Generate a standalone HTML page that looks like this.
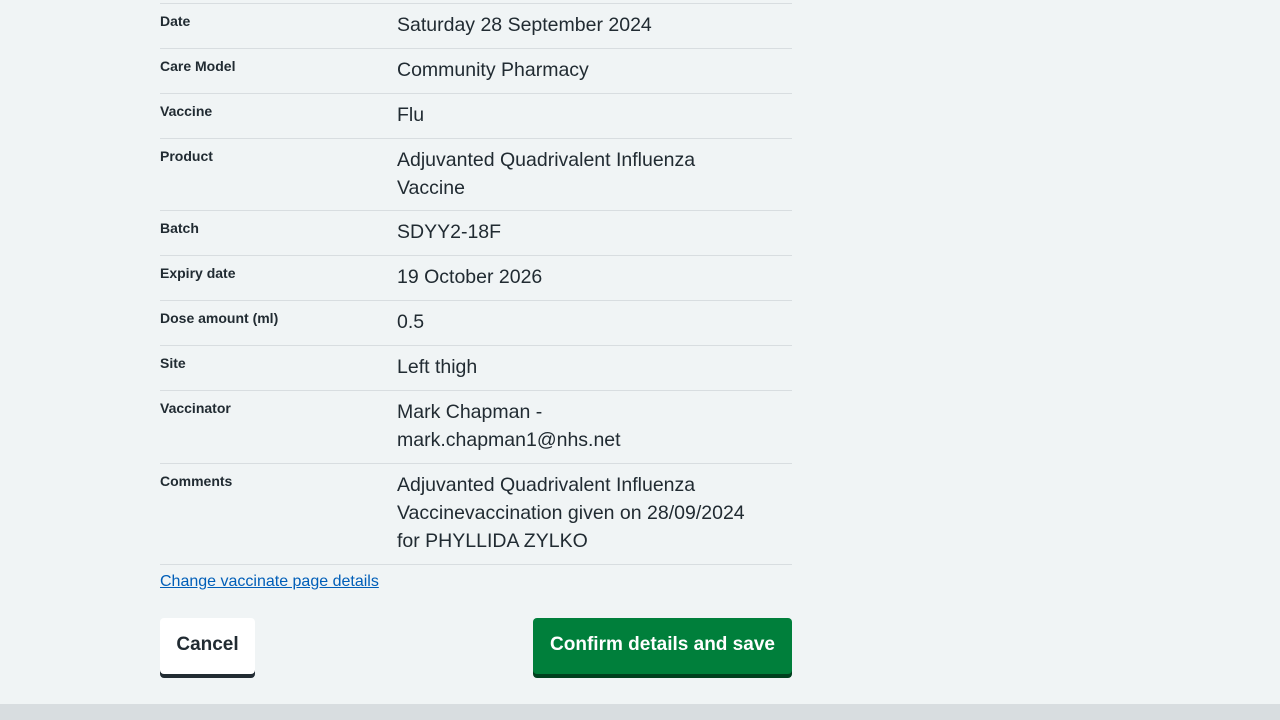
<!DOCTYPE html>
<html><head><meta charset="utf-8"><style>
html,body{margin:0;padding:0}
body{width:1280px;height:720px;background:#f0f4f5;position:relative;overflow:hidden;font-family:"Liberation Sans",sans-serif;color:#212b32}
.line{position:absolute;left:160px;width:632px;height:1px;background:#d8dde0}
.k{position:absolute;left:160px;font-size:14px;font-weight:bold;line-height:18px}
.v{position:absolute;left:397px;font-size:19.5px;line-height:28px;white-space:nowrap;margin-top:1px}
a{position:absolute;left:160px;top:572px;font-size:16px;color:#005eb8;text-decoration:underline;line-height:20px}
.btn{position:absolute;top:618px;height:56px;border-radius:4px;font-weight:bold;font-size:19px;line-height:54px;text-align:center}
.c{left:160px;width:95px;background:#fff;box-shadow:0 4px 0 #212b32;color:#212b32}
.s{left:533px;width:259px;background:#007f3b;box-shadow:0 4px 0 #00401e;color:#fff}
.foot{position:absolute;left:0;top:704px;width:1280px;height:16px;background:#d8dde0}
</style></head><body>
<div class="line" style="top:3px"></div>
<div class="k" style="top:12px">Date</div><div class="v" style="top:10px">Saturday 28 September 2024</div>
<div class="line" style="top:48px"></div>
<div class="k" style="top:57px">Care Model</div><div class="v" style="top:55px">Community Pharmacy</div>
<div class="line" style="top:93px"></div>
<div class="k" style="top:102px">Vaccine</div><div class="v" style="top:100px">Flu</div>
<div class="line" style="top:138px"></div>
<div class="k" style="top:147px">Product</div><div class="v" style="top:145px">Adjuvanted Quadrivalent Influenza<br>Vaccine</div>
<div class="line" style="top:210px"></div>
<div class="k" style="top:219px">Batch</div><div class="v" style="top:217px">SDYY2-18F</div>
<div class="line" style="top:255px"></div>
<div class="k" style="top:264px">Expiry date</div><div class="v" style="top:262px">19 October 2026</div>
<div class="line" style="top:300px"></div>
<div class="k" style="top:309px">Dose amount (ml)</div><div class="v" style="top:307px">0.5</div>
<div class="line" style="top:345px"></div>
<div class="k" style="top:354px">Site</div><div class="v" style="top:352px">Left thigh</div>
<div class="line" style="top:390px"></div>
<div class="k" style="top:399px">Vaccinator</div><div class="v" style="top:397px">Mark Chapman -<br>mark.chapman1@nhs.net</div>
<div class="line" style="top:463px"></div>
<div class="k" style="top:472px">Comments</div><div class="v" style="top:470px">Adjuvanted Quadrivalent Influenza<br>Vaccinevaccination given on 28/09/2024<br>for PHYLLIDA ZYLKO</div>
<div class="line" style="top:564px"></div>
<a href="#">Change vaccinate page details</a>
<div class="btn c">Cancel</div>
<div class="btn s">Confirm details and save</div>
<div class="foot"></div>
</body></html>
